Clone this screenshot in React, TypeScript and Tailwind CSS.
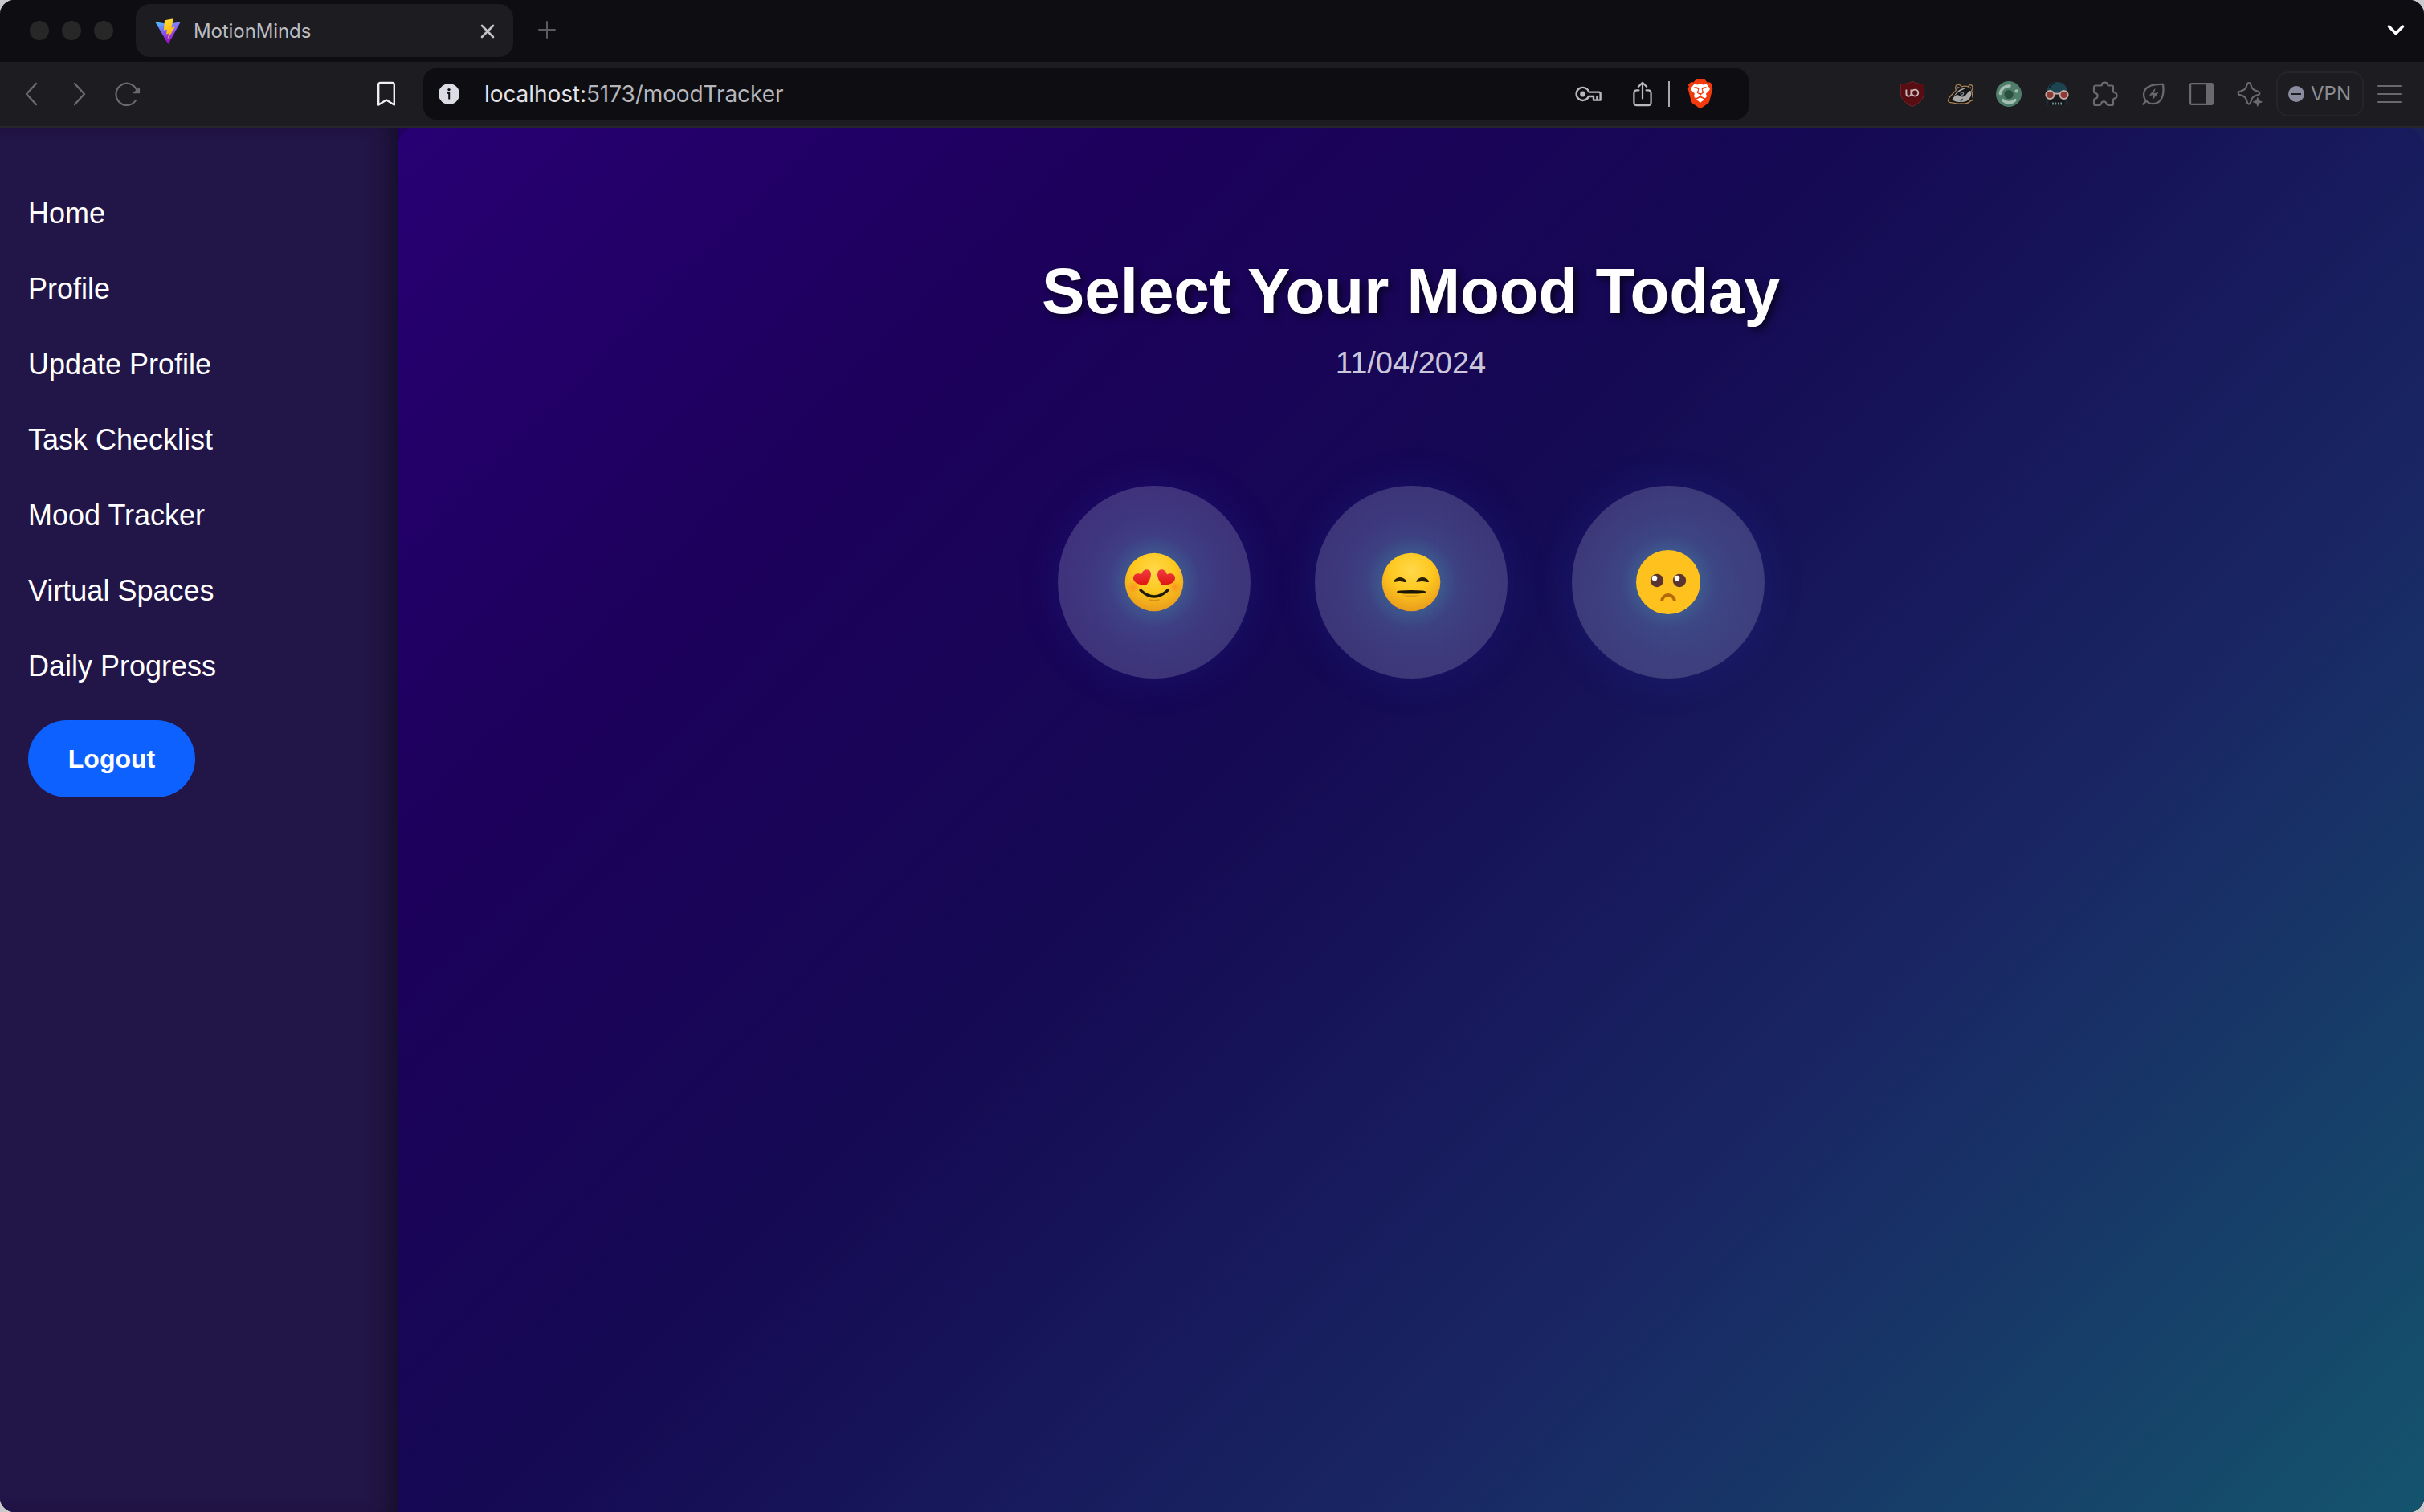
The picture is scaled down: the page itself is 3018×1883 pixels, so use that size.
import React from "react";
import { SiBrave } from "react-icons/si";

function ViteLogo() {
  return (
    <svg viewBox="0 0 32 32" className="h-8 w-8">
      <defs>
        <linearGradient id="vBody" x1="0" y1="0" x2="0.55" y2="0.85">
          <stop offset="0" stopColor="#41d1ff" />
          <stop offset="1" stopColor="#bd34fe" />
        </linearGradient>
        <linearGradient id="vEdge" x1="0" y1="0" x2="0" y2="1">
          <stop offset="0" stopColor="#5f6bff" stopOpacity="0" />
          <stop offset="1" stopColor="#9a00b8" />
        </linearGradient>
        <linearGradient id="vBolt" x1="0.4" y1="0" x2="0.6" y2="1">
          <stop offset="0" stopColor="#ffdd35" />
          <stop offset="1" stopColor="#ffa800" />
        </linearGradient>
      </defs>
      <path d="M0.2 4.2 L16 7 L31.8 4.2 L16.4 31.8 Z" fill="url(#vBody)" />
      <path d="M0.2 4.2 L16 7 L31.8 4.2 L16.4 31.8 Z" fill="url(#vEdge)" />
      <path d="M23 0.2 L12 2.3 L11 14.6 L15 13.8 L14 19.5 L17.2 18.6 L15.6 26 L25 10.5 L20.5 11.4 Z" fill="url(#vBolt)" />
    </svg>
  );
}

function TabBar() {
  return (
    <div className="flex h-[77px] items-start bg-[#0e0e12]">
      <div className="ml-[37px] mt-[26px] flex gap-4">
        <span className="h-6 w-6 rounded-full bg-[#272728]" />
        <span className="h-6 w-6 rounded-full bg-[#272728]" />
        <span className="h-6 w-6 rounded-full bg-[#272728]" />
      </div>
      <div className="ml-7 mt-[5px] flex h-[66px] w-[470px] items-center rounded-[18px] bg-[#1d1c20] pl-6 pr-[23px] pt-[2px]">
        <ViteLogo />
        <span className="ml-[16px] flex-1 text-[24px] leading-[30px] tracking-[-0.1px] text-[#bdbdc0]">MotionMinds</span>
        <svg viewBox="0 0 18 18" className="h-[18px] w-[18px]" stroke="#c4c4c8" strokeWidth="2.6" strokeLinecap="round">
          <path d="M2 2 16 16M16 2 2 16" />
        </svg>
      </div>
      <svg viewBox="0 0 22 22" className="ml-[31px] mt-[26px] h-[22px] w-[22px]" stroke="#5b5b60" strokeWidth="2" strokeLinecap="round">
        <path d="M11 1V21M1 11H21" />
      </svg>
      <svg viewBox="0 0 24 18" className="ml-auto mr-[23px] mt-[29px] h-[18px] w-6" fill="none" stroke="#fff" strokeWidth="3.4" strokeLinecap="round" strokeLinejoin="round">
        <path d="M3.4 4 12 12.8 20.600 4" />
      </svg>
    </div>
  );
}

function Cell({ children }: { children: React.ReactNode }) {
  return <div className="flex w-[60px] shrink-0 items-center justify-center">{children}</div>;
}

const GREY = "#6a6a6e";

function Extensions() {
  return (
    <>
      <Cell>
        <svg viewBox="0 0 32 34" className="h-[34px] w-8">
          <path d="M16 1.2C12 4 7 4.6 1.4 4.6V15C1.4 24 8 29 16 32.6 24 29 30.6 24 30.6 15V4.6C25 4.6 20 4 16 1.2Z" fill="#570d12" stroke="#73232a" strokeWidth="1" />
          <path d="M8.4 11.5V16.8A3 3 0 0 0 14.4 16.8V11.5" fill="none" stroke="#c9b9bb" strokeWidth="1.9" />
          <circle cx="19.2" cy="15.6" r="4" fill="none" stroke="#c9b9bb" strokeWidth="1.9" />
        </svg>
      </Cell>
      <Cell>
        <svg viewBox="0 0 34 28" className="h-7 w-[34px]">
          <path
            d="M1.500 22C2 17 8 14 11.500 9 9.500 5.500 11 2 14.500 2.400 16.500 2.600 17.500 4 18.500 4.800 21.500 3.800 24 3.800 26.500 5 27.500 1.500 31.500 2 32 5.500 32.300 7.500 31 9 30.600 10 32.500 13 31 16 32.200 18.500 33.400 21 31 22.500 29.500 22.500 27 25.500 22 26.500 17.500 26 12 26.500 8 25 4.500 24.600 2.500 24.500 1.500 23.500 1.500 22Z"
            fill="#161518"
            stroke="#a8814f"
            strokeWidth="1.300"
          />
          <path d="M6.500 20.500C9.500 16 12 14.500 14.500 15.500 18 18.500 22 18 24.500 14 27 11 29 8.500 30 11 31 14 29.500 17.500 28.500 19.500 25.500 23.500 20.500 24.500 16.500 24 12 24.500 8.500 23 6.500 20.500Z" fill="#a9a9aa" />
          <path d="M9 16.500C12 10.500 17 6.500 24 6.500 20.500 8.500 15.500 10 13 13Z" fill="#a9a9aa" />
          <path d="M13 4.600 16 5.600 13.400 8Z" fill="#77777a" />
          <path d="M28.500 4.600 30.500 6 29 8Z" fill="#77777a" />
          <circle cx="18.800" cy="13.600" r="2.300" fill="#8e9aa5" />
          <circle cx="18.800" cy="13.600" r="1.100" fill="#111115" />
          <path d="M15.500 22 20 20.400M17 24 19 20.600" stroke="#3e474e" strokeWidth="1.200" />
          <path d="M28.500 19 31.500 20.500" stroke="#161518" strokeWidth="1.600" />
        </svg>
      </Cell>
      <Cell>
        <svg viewBox="0 0 32 32" className="h-8 w-8" fill="none" strokeLinecap="round">
          <circle cx="16" cy="16" r="16" fill="#4f7d69" />
          <circle cx="16" cy="16.500" r="5.600" fill="#284f3f" />
          <path d="M5.400 15.500A10.800 10.800 0 0 1 17 6" stroke="#a5beb3" strokeWidth="3.600" />
          <path d="M8.600 23.600A11 11 0 0 0 23.800 23.600" stroke="#a5beb3" strokeWidth="3.600" />
          <circle cx="25.600" cy="12.400" r="2.100" fill="#a5beb3" />
        </svg>
      </Cell>
      <Cell>
        <svg viewBox="0 0 32 32" className="h-8 w-8">
          <path d="M3 15C3 5 9 1 16 1S29 5 29 15Z" fill="#1d4451" />
          <path d="M6 9C7.500 5 10 3 14 2.400" stroke="#101d24" strokeWidth="1.600" fill="none" />
          <path d="M3.600 22V30M28.400 22V30" stroke="#1d4451" strokeWidth="1.600" />
          <path d="M7 24H25V30H7Z" fill="#141719" />
          <path d="M11 26.400V29.400M14.400 26.400V29.400M17.800 26.400V29.400M21.200 26.400V29.400" stroke="#7b9aa0" strokeWidth="1.700" />
          <circle cx="7.400" cy="17" r="5" fill="#8c3a33" stroke="#c2aaa6" strokeWidth="2" />
          <circle cx="24.600" cy="17" r="5" fill="#8c3a33" stroke="#c2aaa6" strokeWidth="2" />
          <path d="M12.400 15.600H19.600" stroke="#c2aaa6" strokeWidth="2" />
        </svg>
      </Cell>
      <Cell>
        <svg viewBox="0 0 32 32" className="h-8 w-8" fill="none" stroke={GREY} strokeWidth="2.2" strokeLinejoin="round">
          <path d="M4.5 5.5H10.4C11.6 5.5 12 4.8 12 4 12.4 0.9 18.6 0.9 19 4 19 4.8 19.6 5.5 20.6 5.5H24.5Q26 5.5 26 7V12.4C26 13.6 26.6 14 27.4 14.2 31.6 14.8 31.6 21 27.4 21.6 26.6 21.8 26 22.4 26 23.4V28.4Q26 30 24.5 30H19.6C18.4 30 17.8 29.4 17.6 28.4 17 24.4 11.6 24.4 11 28.4 10.8 29.4 10.2 30 9.2 30H4Q2 30 2 28V23.6C2 22.6 2.6 22 3.6 21.8 7.6 21.2 7.6 15.4 3.6 14.8 2.6 14.6 2 14 2 13V8Q2 5.5 4.5 5.5Z" />
        </svg>
      </Cell>
      <Cell>
        <svg viewBox="0 0 30 30" className="h-[30px] w-[30px]" fill="none" stroke={GREY} strokeWidth="2.3" strokeLinejoin="round" strokeLinecap="round">
          <path d="M27 3C28.6 14 26.6 27 14.6 27.2 7.4 27 3 22 3 15.6 3.6 5 14 2.6 27 3Z" />
          <path d="M2.4 27.6 6.4 23.4" />
          <path d="M16.8 9 10.6 16.4 16 15.4 14.4 21.4 20.6 13.6 15 14.8Z" fill={GREY} strokeWidth="1" />
        </svg>
      </Cell>
      <Cell>
        <svg viewBox="0 0 30 28" className="h-7 w-[30px]">
          <rect x="1.1" y="1.1" width="27.8" height="25.8" rx="1.6" fill="none" stroke={GREY} strokeWidth="2.2" />
          <path d="M21 1H28Q29.4 1 29.4 2.4V25.6Q29.4 27 28 27H21Z" fill={GREY} />
        </svg>
      </Cell>
      <Cell>
        <svg viewBox="0 0 32 32" className="h-8 w-8" fill="none" stroke={GREY} strokeWidth="2.2" strokeLinejoin="round">
          <path d="M15 2C16.4 2 17 3 17.4 4.4 18.6 9.4 20 11.2 25.6 12.6 29.2 13.4 29.2 16.6 25.6 17.4 20 18.8 18.6 20.6 17.4 25.6 16.4 29.6 13.6 29.6 12.6 25.6 11.4 20.6 10 18.8 4.4 17.4 0.8 16.6 0.8 13.4 4.4 12.6 10 11.2 11.4 9.4 12.6 4.4 13 3 13.6 2 15 2Z" />
          <circle cx="25.600" cy="25.600" r="6" fill="#1d1c20" stroke="none" />
          <path d="M25.800 20.600C26.600 24 27.400 25 31 25.800 27.400 26.600 26.600 27.600 25.800 31 25 27.600 24.200 26.600 20.600 25.800 24.200 25 25 24 25.800 20.600Z" fill={GREY} strokeWidth="1.200" />
        </svg>
      </Cell>
    </>
  );
}

function Toolbar() {
  return (
    <div className="flex h-[82px] items-center border-b-2 border-[#26252c] bg-[#1d1c20]">
      <div className="ml-[9px] flex">
        <Cell>
          <svg viewBox="0 0 16 30" className="h-[30px] w-4" fill="none" stroke={GREY} strokeWidth="2.4" strokeLinecap="round" strokeLinejoin="round">
            <path d="M14 2 2 15 14 28" />
          </svg>
        </Cell>
        <Cell>
          <svg viewBox="0 0 16 30" className="h-[30px] w-4" fill="none" stroke={GREY} strokeWidth="2.4" strokeLinecap="round" strokeLinejoin="round">
            <path d="M2 2 14 15 2 28" />
          </svg>
        </Cell>
        <Cell>
          <svg viewBox="0 0 32 32" className="h-8 w-8" fill="none" stroke={GREY} strokeWidth="2.2" strokeLinecap="round">
            <path d="M26 24A13.400 13.600 0 1 1 27 10.500" />
            <path d="M30.400 8.500V14.500H23.600Z" fill={GREY} strokeWidth="1.400" strokeLinejoin="round" />
          </svg>
        </Cell>
      </div>
      <svg viewBox="0 0 24 32" className="ml-[280px] h-8 w-6" fill="none" stroke="#f0f0f2" strokeWidth="2.4" strokeLinejoin="round">
        <path d="M2.2 4.4Q2.2 2 4.6 2H19.4Q21.8 2 21.8 4.4V29.6L12 23.4 2.2 29.6Z" />
      </svg>
      <div className="ml-[34px] flex h-16 w-[1650px] items-center rounded-[16px] bg-[#0e0e12]">
        <svg viewBox="0 0 26 26" className="ml-[19px] h-[26px] w-[26px]">
          <circle cx="13" cy="13" r="13" fill="#dcdce4" />
          <circle cx="13" cy="7.600" r="1.700" fill="#0e0e12" />
          <path d="M11 11H14.200V19.600H12.200V12.800H11Z" fill="#0e0e12" />
        </svg>
        <span className="ml-[31px] flex-1 whitespace-nowrap text-[28px] leading-9 tracking-[-0.08px] text-[#b6b6bb]">
          <span className="text-[#e2e2e8]">localhost:</span>5173/moodTracker
        </span>
        <svg viewBox="0 0 34 20" className="mr-px h-5 w-[34px]" fill="none" stroke="#b9b9be" strokeWidth="2.4" strokeLinejoin="round">
          <path d="M17.4 8A8 8 0 1 0 17 13H23V17.6H31.6V9.6Q31.6 7.6 29.6 7.6H17.2" />
          <path d="M27.4 17V12.6" />
          <circle cx="9.6" cy="10" r="3.4" fill="#b9b9be" stroke="none" />
        </svg>
        <svg viewBox="0 0 24 32" className="ml-[37px] h-8 w-6" fill="none" stroke="#b9b9be" strokeWidth="2.2" strokeLinecap="round" strokeLinejoin="round">
          <path d="M7.4 11.4H5Q1.4 11.4 1.4 15V26.6Q1.4 30.2 5 30.2H19Q22.6 30.2 22.6 26.6V15Q22.6 11.4 19 11.4H16.6M12 21.4V2.4M6.8 7 12 1.8 17.2 7" />
        </svg>
        <span className="ml-[20px] h-8 w-[2px] bg-[#a8a8ad]" />
        <span className="relative ml-[20px] mr-[42px] h-9 w-9">
          <svg viewBox="0 0 36 36" className="absolute inset-0 h-9 w-9">
            <path d="M10 5H26L31 12 27 24 18 31 9 24 5 12Z" fill="#fff" />
          </svg>
          <SiBrave className="relative h-9 w-9 text-[#f23a0e]" />
        </span>
      </div>
      <div className="ml-auto flex items-center">
        <Extensions />
        <div className="ml-[3px] flex h-14 w-[109px] items-center rounded-[15px] border-2 border-[#26252a] pl-[13px]">
          <span className="flex h-5 w-5 items-center justify-center rounded-full bg-[#8b8b9f]">
            <span className="h-[2px] w-3 bg-[#1d1c20]" />
          </span>
          <span className="ml-2 text-[24px] leading-7 text-[#8d8d91]">VPN</span>
        </div>
        <div className="ml-[17px] mr-[28px] flex w-[30px] flex-col gap-2">
          <span className="h-[2px] rounded bg-[#6a6a6e]" />
          <span className="h-[2px] rounded bg-[#6a6a6e]" />
          <span className="h-[2px] rounded bg-[#6a6a6e]" />
        </div>
      </div>
    </div>
  );
}

const NAV = ["Home", "Profile", "Update Profile", "Task Checklist", "Mood Tracker", "Virtual Spaces", "Daily Progress"];

function Sidebar() {
  return (
    <aside className="flex w-[495px] shrink-0 flex-col items-start bg-[#221547] pl-[35px] pt-[86px] shadow-[inset_-24px_0_28px_-16px_rgba(16,12,30,0.75)]">
      {NAV.map((item) => (
        <a key={item} className="mb-[52px] text-[36px] leading-[42px] text-white">
          {item}
        </a>
      ))}
      <button className="-mt-[6px] flex h-24 w-[208px] items-center justify-center rounded-full bg-[#0d62ff] text-[32px] font-bold text-white">
        Logout
      </button>
    </aside>
  );
}

function FaceGradient({ id }: { id: string }) {
  return (
    <radialGradient id={id} cx="0.5" cy="0.3" r="0.72">
      <stop offset="0" stopColor="#ffd84a" />
      <stop offset="0.5" stopColor="#fec81f" />
      <stop offset="1" stopColor="#e89a1c" />
    </radialGradient>
  );
}

function HeartEyes() {
  return (
    <svg viewBox="0 0 80 80" className="h-20 w-20">
      <defs>
        <FaceGradient id="faceLove" />
        <radialGradient id="blush">
          <stop offset="0" stopColor="#ff7a1f" stopOpacity="0.6" />
          <stop offset="1" stopColor="#ff7a1f" stopOpacity="0" />
        </radialGradient>
        <linearGradient id="heart" x1="0" y1="0" x2="0" y2="1">
          <stop offset="0" stopColor="#f23b40" />
          <stop offset="1" stopColor="#df1512" />
        </linearGradient>
      </defs>
      <circle cx="40" cy="40" r="36.300" fill="url(#faceLove)" />
      <circle cx="14.500" cy="46" r="8" fill="url(#blush)" />
      <circle cx="65.500" cy="46" r="8" fill="url(#blush)" />
      <path d="M30 43.800C22 44.200 15 41 14 36 13.200 30.500 19.500 27.500 24 30.600 25 25.500 30 22.500 34 25.300 38 29 35.500 37 30 43.800Z" fill="url(#heart)" />
      <path d="M50 43.800C58 44.200 65 41 66 36 66.800 30.500 60.500 27.500 56 30.600 55 25.500 50 22.500 46 25.300 42 29 44.500 37 50 43.800Z" fill="url(#heart)" />
      <path d="M23 50Q40 66 57 50" fill="none" stroke="#1f1a08" strokeWidth="3.400" strokeLinecap="round" />
      <path d="M34 62Q40 63.600 46 62" fill="none" stroke="#d68f16" strokeWidth="1.400" strokeLinecap="round" />
    </svg>
  );
}

function Expressionless() {
  return (
    <svg viewBox="0 0 80 80" className="h-20 w-20">
      <defs>
        <FaceGradient id="faceFlat" />
      </defs>
      <circle cx="40" cy="40" r="36.300" fill="url(#faceFlat)" />
      <path d="M18 39C20 35.500 23 34 26 34S32.500 35.500 34.300 39C34 41 30 39.500 26 39S18.500 41 18 39Z" fill="#2a2007" />
      <path d="M46 39C48 35.500 51 34 54 34S60.500 35.500 62.300 39C62 41 58 39.500 54 39S46.500 41 46 39Z" fill="#2a2007" />
      <path d="M22 52Q22 50 40 50T58.300 52Q58.300 54.600 40 54.600T22 52Z" fill="#1c1505" />
      <path d="M28 56.500Q40 60 52 56.500" fill="#dd9817" />
    </svg>
  );
}

function Pleading() {
  return (
    <svg viewBox="0 0 80 80" className="h-20 w-20">
      <circle cx="40" cy="40" r="40" fill="#fec11d" />
      <circle cx="26" cy="38" r="8.200" fill="#5a3430" />
      <circle cx="54" cy="38" r="8.200" fill="#5a3430" />
      <circle cx="23" cy="35" r="3.300" fill="#fff" />
      <circle cx="51" cy="35" r="3.300" fill="#fff" />
      <path d="M32 64A8 8 0 0 1 48 64" fill="none" stroke="#b5690b" strokeWidth="4" />
    </svg>
  );
}

function Mood({ label, children }: { label: string; children: React.ReactNode }) {
  return (
    <button
      aria-label={label}
      className="flex h-60 w-60 items-center justify-center rounded-full bg-[radial-gradient(circle,rgba(62,150,190,0.42)_0,rgba(62,150,190,0.34)_38px,rgba(62,120,200,0.19)_58px,rgba(62,100,200,0.13)_85px,rgba(62,90,210,0.06)_120px),linear-gradient(rgba(240,245,255,0.18),rgba(240,245,255,0.18))] shadow-[0_0_50px_rgba(30,60,190,0.2)]"
    >
      {children}
    </button>
  );
}

function MoodPage() {
  return (
    <div className="flex flex-1 bg-[linear-gradient(90deg,#210060_0%,#1a2058_100%)]">
      <main className="flex flex-1 flex-col items-center rounded-t-[24px] bg-[linear-gradient(135deg,#270073_0%,#1d005c_22%,#150953_43%,#192764_70%,#14546d_100%)] pt-[156px]">
        <h1 className="whitespace-nowrap text-[80px] font-bold leading-[96px] tracking-[-0.05px] text-white [text-shadow:4px_4px_8px_rgba(0,0,0,0.6)]">
          Select Your Mood Today
        </h1>
        <p className="mt-[19px] text-[38px] leading-[44px] text-[#cbc6dc]">11/04/2024</p>
        <div className="mt-[131px] flex gap-20">
          <Mood label="Happy">
            <HeartEyes />
          </Mood>
          <Mood label="Neutral">
            <Expressionless />
          </Mood>
          <Mood label="Sad">
            <Pleading />
          </Mood>
        </div>
      </main>
    </div>
  );
}

export default function App() {
  return (
    <div className="h-[1883px] w-[3018px] overflow-hidden bg-[#c9c9cb]">
      <div className="flex h-full w-full flex-col overflow-hidden rounded-[18px] bg-[#171a4c]">
        <header className="font-[Inter,sans-serif]">
          <TabBar />
          <Toolbar />
        </header>
        <div className="flex flex-1 font-['Liberation_Sans',Arial,sans-serif]">
          <Sidebar />
          <MoodPage />
        </div>
      </div>
    </div>
  );
}
